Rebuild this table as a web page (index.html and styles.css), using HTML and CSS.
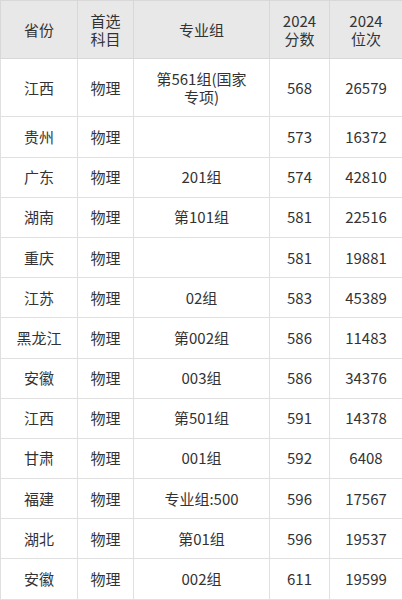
FILE: index.html
```html
<!DOCTYPE html>
<html lang="zh-CN">
<head>
<meta charset="utf-8">
<link rel="stylesheet" href="styles.css">
</head>
<body>
<table class="score-table">
  <colgroup>
    <col class="c-prov"><col class="c-subj"><col class="c-group"><col class="c-score"><col class="c-rank">
  </colgroup>
  <thead>
    <tr><th>省份</th><th>首选<br>科目</th><th>专业组</th><th>2024<br>分数</th><th>2024<br>位次</th></tr>
  </thead>
  <tbody>
    <tr><td>江西</td><td>物理</td><td>第561组(国家<br>专项)</td><td>568</td><td>26579</td></tr>
    <tr><td>贵州</td><td>物理</td><td></td><td>573</td><td>16372</td></tr>
    <tr><td>广东</td><td>物理</td><td>201组</td><td>574</td><td>42810</td></tr>
    <tr><td>湖南</td><td>物理</td><td>第101组</td><td>581</td><td>22516</td></tr>
    <tr><td>重庆</td><td>物理</td><td></td><td>581</td><td>19881</td></tr>
    <tr><td>江苏</td><td>物理</td><td>02组</td><td>583</td><td>45389</td></tr>
    <tr><td>黑龙江</td><td>物理</td><td>第002组</td><td>586</td><td>11483</td></tr>
    <tr><td>安徽</td><td>物理</td><td>003组</td><td>586</td><td>34376</td></tr>
    <tr><td>江西</td><td>物理</td><td>第501组</td><td>591</td><td>14378</td></tr>
    <tr><td>甘肃</td><td>物理</td><td>001组</td><td>592</td><td>6408</td></tr>
    <tr><td>福建</td><td>物理</td><td>专业组:500</td><td>596</td><td>17567</td></tr>
    <tr><td>湖北</td><td>物理</td><td>第01组</td><td>596</td><td>19537</td></tr>
    <tr><td>安徽</td><td>物理</td><td>002组</td><td>611</td><td>19599</td></tr>
  </tbody>
</table>
</body>
</html>
```
FILE: styles.css
```css
html, body {
  margin: 0;
  padding: 0;
  background: #ffffff;
}
body {
  font-family: "Noto Sans CJK SC", "Noto Sans", sans-serif;
  font-size: 15px;
  color: #333333;
}
.score-table {
  width: 402px;
  table-layout: fixed;
  border-collapse: collapse;
}
.c-prov { width: 77px; }
.c-subj { width: 56px; }
.c-group { width: 136px; }
.c-score { width: 60px; }
.c-rank { width: 73px; }
.score-table th,
.score-table td {
  border: 1px solid #e0e0e0;
  padding: 10.6px 2px;
  line-height: 18px;
  text-align: center;
  vertical-align: middle;
  font-weight: normal;
}
.score-table th {
  background: #e8e8e8;
  border-color: #d8d8d8;
}
.score-table td {
  height: 18px;
}
```
